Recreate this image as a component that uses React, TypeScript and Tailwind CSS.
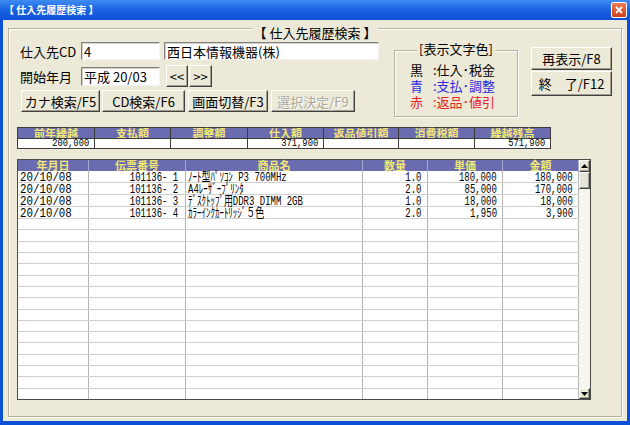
import type { ReactNode } from 'react';

// ─── data ────────────────────────────────────────────────────────────────────

const summary = [
  { label: '前年繰越', w: 'w-[77px]', value: '200,000' },
  { label: '支払額', w: 'w-[76px]', value: '' },
  { label: '調整額', w: 'w-[77px]', value: '' },
  { label: '仕入額', w: 'w-[76px]', value: '371,900' },
  { label: '返品値引額', w: 'w-[75px]', value: '' },
  { label: '消費税額', w: 'w-[76px]', value: '' },
  { label: '繰越残高', w: 'w-[75px]', value: '571,900', last: true },
];

const cols = [
  { label: '年月日', w: 'w-[71px]' },
  { label: '伝票番号', w: 'w-[97px]' },
  { label: '商品名', w: 'w-[177px]' },
  { label: '数量', w: 'w-[65px]' },
  { label: '単価', w: 'w-[75px]' },
  { label: '金額', w: 'w-[76px]' },
];

const rows = [
  { date: '20/10/08', no: '101136- 1', name: 'ﾉｰﾄ型ﾊﾟｿｺﾝ P3 700MHz', qty: '1.0', price: '180,000', amount: '180,000' },
  { date: '20/10/08', no: '101136- 2', name: 'A4ﾚｰｻﾞｰﾌﾟﾘﾝﾀ', qty: '2.0', price: '85,000', amount: '170,000' },
  { date: '20/10/08', no: '101136- 3', name: 'ﾃﾞｽｸﾄｯﾌﾟ用DDR3 DIMM 2GB', qty: '1.0', price: '18,000', amount: '18,000' },
  { date: '20/10/08', no: '101136- 4', name: 'ｶﾗｰｲﾝｸｶｰﾄﾘｯｼﾞ５色', qty: '2.0', price: '1,950', amount: '3,900' },
];

const ROW_COUNT = 20;

// ─── small pieces ────────────────────────────────────────────────────────────

const bevel =
  'border border-t-white border-l-white border-r-[#404040] border-b-[#404040] shadow-[inset_-1px_-1px_0_#a19e90]';
const sunken =
  'border border-t-[#7f7f7f] border-l-[#7f7f7f] border-r-[#f4f4f4] border-b-[#f4f4f4] shadow-[inset_1px_1px_0_#d4d2c6] bg-white';
const etched = 'border border-[#b5b2a2] shadow-[inset_1px_1px_0_#ffffff,1px_1px_0_#ffffff]';

function Button({ w, h = 'h-[22px]', disabled, children }: { w: string; h?: string; disabled?: boolean; children: ReactNode }) {
  return (
    <div
      className={`${w} ${h} ${bevel} bg-[#ECE9D8] flex items-center justify-center text-[13px] leading-none ${
        disabled ? 'text-[#aca899] [text-shadow:1px_1px_0_#ffffff]' : 'text-black'
      }`}
    >
      {children}
    </div>
  );
}

function Input({ w, h, children }: { w: string; h: string; children: ReactNode }) {
  return (
    <div className={`${w} ${h} ${sunken} flex items-center pl-[2px] text-[13px] leading-none overflow-hidden whitespace-nowrap`}>
      {children}
    </div>
  );
}

// condensed mono text, like the old MS Gothic grid
function Mono({ children, right, wide, small }: { children: ReactNode; right?: boolean; wide?: boolean; small?: boolean }) {
  return (
    <span
      className={`inline-block whitespace-pre font-['Liberation_Mono','Noto_Sans_CJK_JP',monospace] ${
        small ? 'text-[11px] leading-[9px]' : 'text-[13px] leading-[11px] translate-y-[1px]'
      } ${right ? 'origin-right' : 'origin-left'} ${
        small ? 'scale-x-[0.8]' : wide ? 'scale-x-[0.83]' : 'scale-x-[0.69]'
      }`}
    >
      {children}
    </span>
  );
}

function Arrow({ down }: { down?: boolean }) {
  return (
    <svg width="7" height="4" viewBox="0 0 7 4">
      {down ? <path d="M0 0h7L3.5 4z" fill="#000" /> : <path d="M0 4h7L3.5 0z" fill="#000" />}
    </svg>
  );
}

// ─── sections ────────────────────────────────────────────────────────────────

function TitleBar() {
  return (
    <div className="h-[20px] flex items-center justify-between bg-gradient-to-b from-[#3f8cf3] via-[#1a62e2] to-[#0b4fd6]">
      <span className="pl-[4px] text-white font-bold text-[10px] leading-none">【 仕入先履歴検索 】</span>
      <div className="mr-[3px] w-[16px] h-[16px] rounded-[2px] border border-white bg-gradient-to-b from-[#ec7a55] to-[#c9401c] flex items-center justify-center">
        <svg width="8" height="8" viewBox="0 0 8 8">
          <path d="M1 1L7 7M7 1L1 7" stroke="#fff" strokeWidth="1.8" />
        </svg>
      </div>
    </div>
  );
}

function Legend() {
  return (
    <div className={`relative ml-[15px] mt-[8px] w-[124px] h-[67px] ${etched}`}>
      <span className="absolute left-1/2 -translate-x-1/2 top-[-10px] bg-[#ECE9D8] px-[2px] text-[13px] leading-[15px] whitespace-nowrap">
        [表示文字色]
      </span>
      <div className="pt-[11px] pl-[15px] text-[13px] leading-[16px]">
        <div className="flex text-black">
          <span className="w-[23px]">黒</span>
          <span>:仕入･税金</span>
        </div>
        <div className="flex text-[#2c2cdc]">
          <span className="w-[23px]">青</span>
          <span>:支払･調整</span>
        </div>
        <div className="flex text-[#e42424]">
          <span className="w-[23px]">赤</span>
          <span>:返品･値引</span>
        </div>
      </div>
    </div>
  );
}

function Summary() {
  return (
    <div className="ml-[8px] mt-[10px] w-[534px] border border-[#3c3c3c] flex">
      {summary.map((c) => (
        <div key={c.label} className={`${c.w} flex flex-col ${c.last ? '' : 'border-r border-[#3c3c3c]'}`}>
          <div className="h-[10px] bg-[#6b6bb0] text-[#f2e872] font-bold text-[11px] leading-[10px] text-center whitespace-nowrap">
            {c.label}
          </div>
          <div className="h-[10px] border-t border-[#3c3c3c] bg-white flex items-center justify-end pr-[5px]">
            <Mono right small>
              {c.value}
            </Mono>
          </div>
        </div>
      ))}
    </div>
  );
}

function List() {
  const empty = Array.from({ length: ROW_COUNT - rows.length });
  return (
    <div className="ml-[8px] mt-[10px] w-[574px] h-[241px] border border-[#4a4a4a] flex">
      <div className="w-[561px] flex flex-col">
        <div className="h-[11px] flex bg-[#6b6bb0]">
          {cols.map((c) => (
            <div
              key={c.label}
              className={`${c.w} border-r border-[#a9a9cf] text-[#f2e872] font-bold text-[11px] leading-[11px] text-center`}
            >
              {c.label}
            </div>
          ))}
        </div>
        <div className="h-[228px] flex flex-col bg-white">
          {rows.map((r) => (
            <div key={r.no} className="flex-1 flex border-b border-[#cfcfcf]">
              <div className="w-[71px] border-r border-[#b4b4b4] flex items-center pl-[2px]">
                <Mono wide>{r.date}</Mono>
              </div>
              <div className="w-[97px] border-r border-[#b4b4b4] flex items-center justify-end pr-[7px]">
                <Mono right>{r.no}</Mono>
              </div>
              <div className="w-[177px] border-r border-[#b4b4b4] flex items-center pl-[2px]">
                <Mono>{r.name}</Mono>
              </div>
              <div className="w-[65px] border-r border-[#b4b4b4] flex items-center justify-end pr-[6px]">
                <Mono right>{r.qty}</Mono>
              </div>
              <div className="w-[75px] border-r border-[#b4b4b4] flex items-center justify-end pr-[5px]">
                <Mono right>{r.price}</Mono>
              </div>
              <div className="w-[76px] border-r border-[#b4b4b4] flex items-center justify-end pr-[5px]">
                <Mono right>{r.amount}</Mono>
              </div>
            </div>
          ))}
          {empty.map((_, i) => (
            <div
              key={i}
              className={`flex-1 flex ${i === empty.length - 1 ? '' : 'border-b border-[#cfcfcf]'}`}
            >
              {cols.map((c) => (
                <div key={c.label} className={`${c.w} border-r border-[#b4b4b4]`} />
              ))}
            </div>
          ))}
        </div>
      </div>
      {/* scrollbar */}
      <div className="w-[11px] flex flex-col bg-[#f6f5f0]">
        <div className={`h-[12px] ${bevel} bg-[#ECE9D8] flex items-center justify-center`}>
          <Arrow />
        </div>
        <div className={`h-[17px] ${bevel} bg-[#e6e4da]`} />
        <div className="flex-1" />
        <div className={`h-[11px] ${bevel} bg-[#ECE9D8] flex items-center justify-center`}>
          <Arrow down />
        </div>
      </div>
    </div>
  );
}

// ─── App ─────────────────────────────────────────────────────────────────────

export default function App() {
  return (
    <div className="w-[630px] h-[425px] flex flex-col bg-[#0c50d8] font-['Noto_Sans_CJK_JP',sans-serif] text-black select-none overflow-hidden">
      <TitleBar />
      <div className="flex-1 mx-[3px] mb-[4px] bg-[#ECE9D8] pl-[5px] pt-[8px]">
        <div className={`relative w-[614px] h-[389px] ${etched}`}>
          <span className="absolute left-1/2 -translate-x-1/2 top-[-4px] bg-[#ECE9D8] px-[2px] text-[13px] leading-[15px] whitespace-nowrap">
            【 仕入先履歴検索 】
          </span>

          {/* search controls */}
          <div className="mt-[13px] pl-[11px] flex items-start">
            <div className="w-[359px] flex flex-col">
              <div className="h-[18px] flex items-center">
                <span className="w-[61px] text-[13px] leading-none">仕入先CD</span>
                <Input w="w-[79px]" h="h-[18px]">4</Input>
                <div className="ml-[4px]">
                  <Input w="w-[215px]" h="h-[18px]">西日本情報機器(株)</Input>
                </div>
              </div>
              <div className="mt-[5px] h-[22px] flex items-center">
                <span className="w-[61px] text-[13px] leading-none">開始年月</span>
                <Input w="w-[79px]" h="h-[19px]">平成 20/03</Input>
                <div className="ml-[6px]">
                  <Button w="w-[22px]">&lt;&lt;</Button>
                </div>
                <div className="ml-[1px]">
                  <Button w="w-[23px]">&gt;&gt;</Button>
                </div>
              </div>
              <div className="mt-[3px] h-[22px] flex pl-[1px] gap-[2px]">
                <Button w="w-[79px]">カナ検索/F5</Button>
                <Button w="w-[83px]">CD検索/F6</Button>
                <div className="ml-[1px]">
                  <Button w="w-[80px]">画面切替/F3</Button>
                </div>
                <div className="ml-[1px]">
                  <Button w="w-[84px]" disabled>
                    選択決定/F9
                  </Button>
                </div>
              </div>
            </div>

            <Legend />

            <div className="ml-[13px] mt-[5px] flex flex-col gap-[1px]">
              <Button w="w-[81px]" h="h-[23px]">
                再表示/F8
              </Button>
              <Button w="w-[81px]" h="h-[25px]">
                終　了/F12
              </Button>
            </div>
          </div>

          <Summary />
          <List />
        </div>
      </div>
    </div>
  );
}
